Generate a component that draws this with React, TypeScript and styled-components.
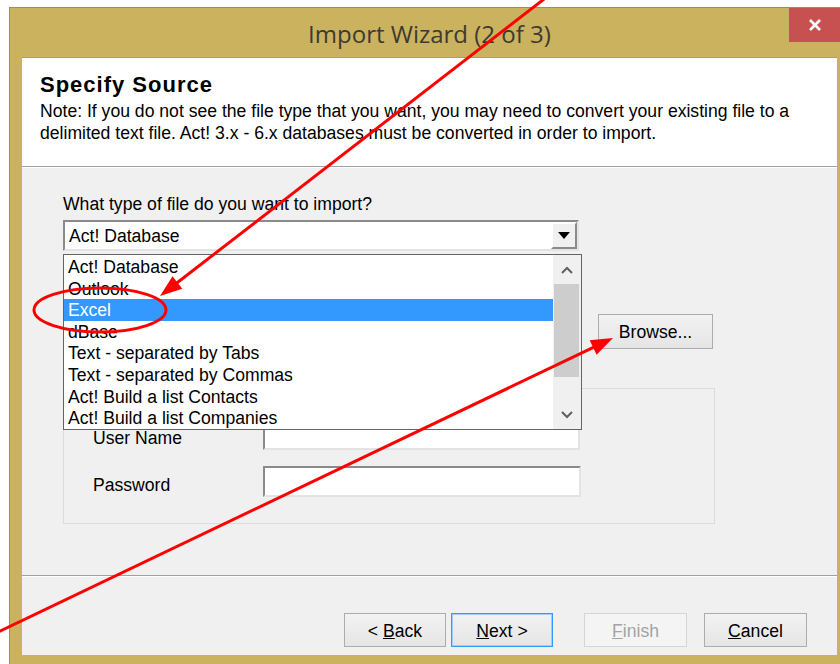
import React from 'react';
import styled, { createGlobalStyle } from 'styled-components';

const GlobalStyle = createGlobalStyle`
  html, body {
    margin: 0;
    padding: 0;
    background: #ffffff;
    width: 840px;
    height: 664px;
    overflow: hidden;
  }
  * {
    box-sizing: border-box;
  }
`;

const UI_FONT = `"Liberation Sans", Arial, sans-serif`;

const Page = styled.div`
  position: relative;
  width: 840px;
  height: 664px;
  padding: 7px 0 0 9px;
  overflow: hidden;
  font-family: ${UI_FONT};
  font-size: 17.6px;
  color: #000;
`;

const Window = styled.div`
  width: 841px;
  height: 658px;
  background: #cbb25e;
  border: 1px solid #a38f47;
  display: flex;
  flex-direction: column;
`;

const TitleBar = styled.div`
  height: 49px;
  display: grid;
  grid-template-columns: 1fr auto 1fr;
  align-items: start;
`;

const Title = styled.div`
  grid-column: 2;
  font-family: "Open Sans", "Noto Sans", sans-serif;
  font-size: 24px;
  line-height: 52px;
  color: #3b3b33;
`;

const CloseButton = styled.div`
  grid-column: 3;
  justify-self: end;
  width: 51px;
  height: 34px;
  margin-right: 9px;
  background: #c75050;
  display: flex;
  align-items: center;
  justify-content: center;
`;

const Client = styled.div`
  flex: 1;
  margin: 0 12px 9px 12px;
  border-top: 1px solid #b59e52;
  background: #f0f0f0;
  display: flex;
  flex-direction: column;
`;

const Header = styled.div`
  height: 108px;
  background: #ffffff;
  padding: 14px 18px 0 18px;
`;

const Heading = styled.div`
  font-weight: bold;
  font-size: 22px;
  line-height: 26px;
  letter-spacing: 1px;
`;

const Note = styled.div`
  padding-top: 2px;
  line-height: 22px;
`;

const Rule = styled.div`
  height: 2px;
  border-top: 1px solid #a0a0a0;
  border-bottom: 1px solid #ffffff;
`;

const Body = styled.div`
  flex: 1;
  padding: 26px 0 0 41px;
  display: flex;
  flex-direction: column;
  align-items: flex-start;
`;

const Label = styled.div`
  line-height: 20px;
`;

const ComboWrap = styled.div`
  position: relative;
  margin-top: 6px;
`;

const Combo = styled.div`
  width: 516px;
  height: 31px;
  background: #fff;
  border: 2px solid;
  border-color: #8a8a8a #e3e3e3 #e3e3e3 #8a8a8a;
  display: flex;
  align-items: stretch;
`;

const ComboText = styled.div`
  flex: 1;
  padding-left: 4px;
  line-height: 29px;
`;

const ComboButton = styled.div`
  width: 26px;
  background: #f0f0f0;
  border: 2px solid;
  border-color: #ffffff #8a8a8a #8a8a8a #ffffff;
  display: flex;
  align-items: center;
  justify-content: center;
`;

const DropList = styled.div`
  position: absolute;
  left: 0;
  top: calc(100% + 3px);
  width: 519px;
  height: 176px;
  background: #fff;
  border: 1px solid #646464;
  display: flex;
  z-index: 5;
`;

const Items = styled.div`
  flex: 1;
  padding-top: 1px;
`;

const Item = styled.div<{ selected?: boolean }>`
  height: 21.6px;
  padding: 1px 0 0 4px;
  line-height: 21.6px;
  white-space: nowrap;
  background: ${p => (p.selected ? '#3399ff' : 'transparent')};
  color: ${p => (p.selected ? '#ffffff' : '#000000')};
`;

const ScrollBar = styled.div`
  width: 28px;
  background: #f0f0f0;
  display: flex;
  flex-direction: column;
`;

const ScrollArrow = styled.div`
  height: 29px;
  display: flex;
  align-items: center;
  justify-content: center;
`;

const ScrollThumb = styled.div`
  height: 93px;
  margin: 0 2px 0 1px;
  background: #cdcdcd;
`;

const ScrollTrack = styled.div`
  flex: 1;
`;

const FileRow = styled.div`
  display: flex;
  align-items: center;
  gap: 19px;
  margin-top: 63px;
`;

const TextBox = styled.div<{ width: number }>`
  width: ${p => p.width}px;
  height: 31px;
  background: #fff;
  border: 2px solid;
  border-color: #8a8a8a #e3e3e3 #e3e3e3 #8a8a8a;
`;

const Button = styled.div<{ width: number; height?: number; focused?: boolean; disabled?: boolean }>`
  width: ${p => p.width}px;
  height: ${p => p.height ?? 34}px;
  border: 1px solid ${p => (p.focused ? '#3399ff' : p.disabled ? '#d5d5d5' : '#acacac')};
  box-shadow: ${p => (p.focused ? 'inset 0 0 0 1px #9fcdfb' : 'none')};
  background: ${p => (p.disabled ? '#f4f4f4' : 'linear-gradient(#f2f2f2, #e5e5e5)')};
  color: ${p => (p.disabled ? '#a3a3a3' : '#000')};
  padding-top: 2px;
  display: flex;
  align-items: center;
  justify-content: center;
`;

const GroupBox = styled.div`
  width: 652px;
  height: 136px;
  margin-top: 39px;
  border: 1px solid #dcdcdc;
  padding: 30px 0 0 29px;
  display: flex;
  flex-direction: column;
  gap: 16px;
`;

const FieldRow = styled.div`
  display: flex;
  align-items: center;
`;

const FieldLabel = styled.div`
  width: 170px;
  padding-top: 7px;
`;

const Footer = styled.div`
  height: 78px;
  padding: 36px 30px 0 0;
  display: flex;
  justify-content: flex-end;
  align-items: flex-start;
`;

const ButtonGap = styled.div<{ size: number }>`
  width: ${p => p.size}px;
`;

const Overlay = styled.svg`
  position: absolute;
  left: 0;
  top: 0;
  pointer-events: none;
  z-index: 10;
`;

const fileTypes = [
  'Act! Database',
  'Outlook',
  'Excel',
  'dBase',
  'Text - separated by Tabs',
  'Text - separated by Commas',
  'Act! Build a list Contacts',
  'Act! Build a list Companies',
];

// red arrow with a filled head at (tx, ty)
const Arrow: React.FC<{ x1: number; y1: number; tx: number; ty: number }> = ({ x1, y1, tx, ty }) => {
  const dx = tx - x1;
  const dy = ty - y1;
  const len = Math.hypot(dx, dy);
  const ux = dx / len;
  const uy = dy / len;
  const head = 22;
  const half = 8;
  const bx = tx - ux * head;
  const by = ty - uy * head;
  const px = -uy * half;
  const py = ux * half;
  return (
    <g>
      <line x1={x1} y1={y1} x2={bx + ux * 2} y2={by + uy * 2} stroke="#ff0000" strokeWidth={3} />
      <polygon points={`${tx},${ty} ${bx + px},${by + py} ${bx - px},${by - py}`} fill="#ff0000" />
    </g>
  );
};

const App: React.FC = () => {
  return (
    <Page>
      <GlobalStyle />
      <Window>
        <TitleBar>
          <Title>Import Wizard (2 of 3)</Title>
          <CloseButton>
            <svg width="16" height="16" viewBox="0 0 16 16">
              <path d="M3 3 L13 13 M13 3 L3 13" stroke="#ffffff" strokeWidth="2.6" />
            </svg>
          </CloseButton>
        </TitleBar>
        <Client>
          <Header>
            <Heading>Specify Source</Heading>
            <Note>
              Note: If you do not see the file type that you want, you may need to convert your existing file to a
              <br />
              delimited text file. Act! 3.x - 6.x databases must be converted in order to import.
            </Note>
          </Header>
          <Rule />
          <Body>
            <Label>What type of file do you want to import?</Label>
            <ComboWrap>
              <Combo>
                <ComboText>Act! Database</ComboText>
                <ComboButton>
                  <svg width="12" height="7" viewBox="0 0 12 7">
                    <polygon points="0,0 12,0 6,7" fill="#000" />
                  </svg>
                </ComboButton>
              </Combo>
              <DropList>
                <Items>
                  {fileTypes.map(t => (
                    <Item key={t} selected={t === 'Excel'}>
                      {t}
                    </Item>
                  ))}
                </Items>
                <ScrollBar>
                  <ScrollArrow>
                    <svg width="12" height="8" viewBox="0 0 12 8">
                      <path d="M1 7 L6 2 L11 7" stroke="#606060" strokeWidth="2" fill="none" />
                    </svg>
                  </ScrollArrow>
                  <ScrollThumb />
                  <ScrollTrack />
                  <ScrollArrow>
                    <svg width="12" height="8" viewBox="0 0 12 8">
                      <path d="M1 1 L6 6 L11 1" stroke="#606060" strokeWidth="2" fill="none" />
                    </svg>
                  </ScrollArrow>
                </ScrollBar>
              </DropList>
            </ComboWrap>
            <FileRow>
              <TextBox width={516} />
              <Button width={115} height={35}>Browse...</Button>
            </FileRow>
            <GroupBox>
              <FieldRow>
                <FieldLabel>User Name</FieldLabel>
                <TextBox width={317} />
              </FieldRow>
              <FieldRow>
                <FieldLabel>Password</FieldLabel>
                <TextBox width={318} />
              </FieldRow>
            </GroupBox>
          </Body>
          <Rule />
          <Footer>
            <Button width={102}>
              &lt;&nbsp;<u>B</u>ack
            </Button>
            <ButtonGap size={5} />
            <Button width={102} focused>
              <u>N</u>ext &gt;
            </Button>
            <ButtonGap size={31} />
            <Button width={103} disabled>
              <u>F</u>inish
            </Button>
            <ButtonGap size={17} />
            <Button width={103}>
              <u>C</u>ancel
            </Button>
          </Footer>
        </Client>
      </Window>
      <Overlay width={840} height={664} viewBox="0 0 840 664">
        <Arrow x1={548} y1={-4} tx={160} ty={296} />
        <ellipse cx={100} cy={310} rx={66} ry={22} stroke="#ff0000" strokeWidth={3} fill="none" />
        <Arrow x1={-2} y1={632} tx={613} ty={338} />
      </Overlay>
    </Page>
  );
};

export default App;
